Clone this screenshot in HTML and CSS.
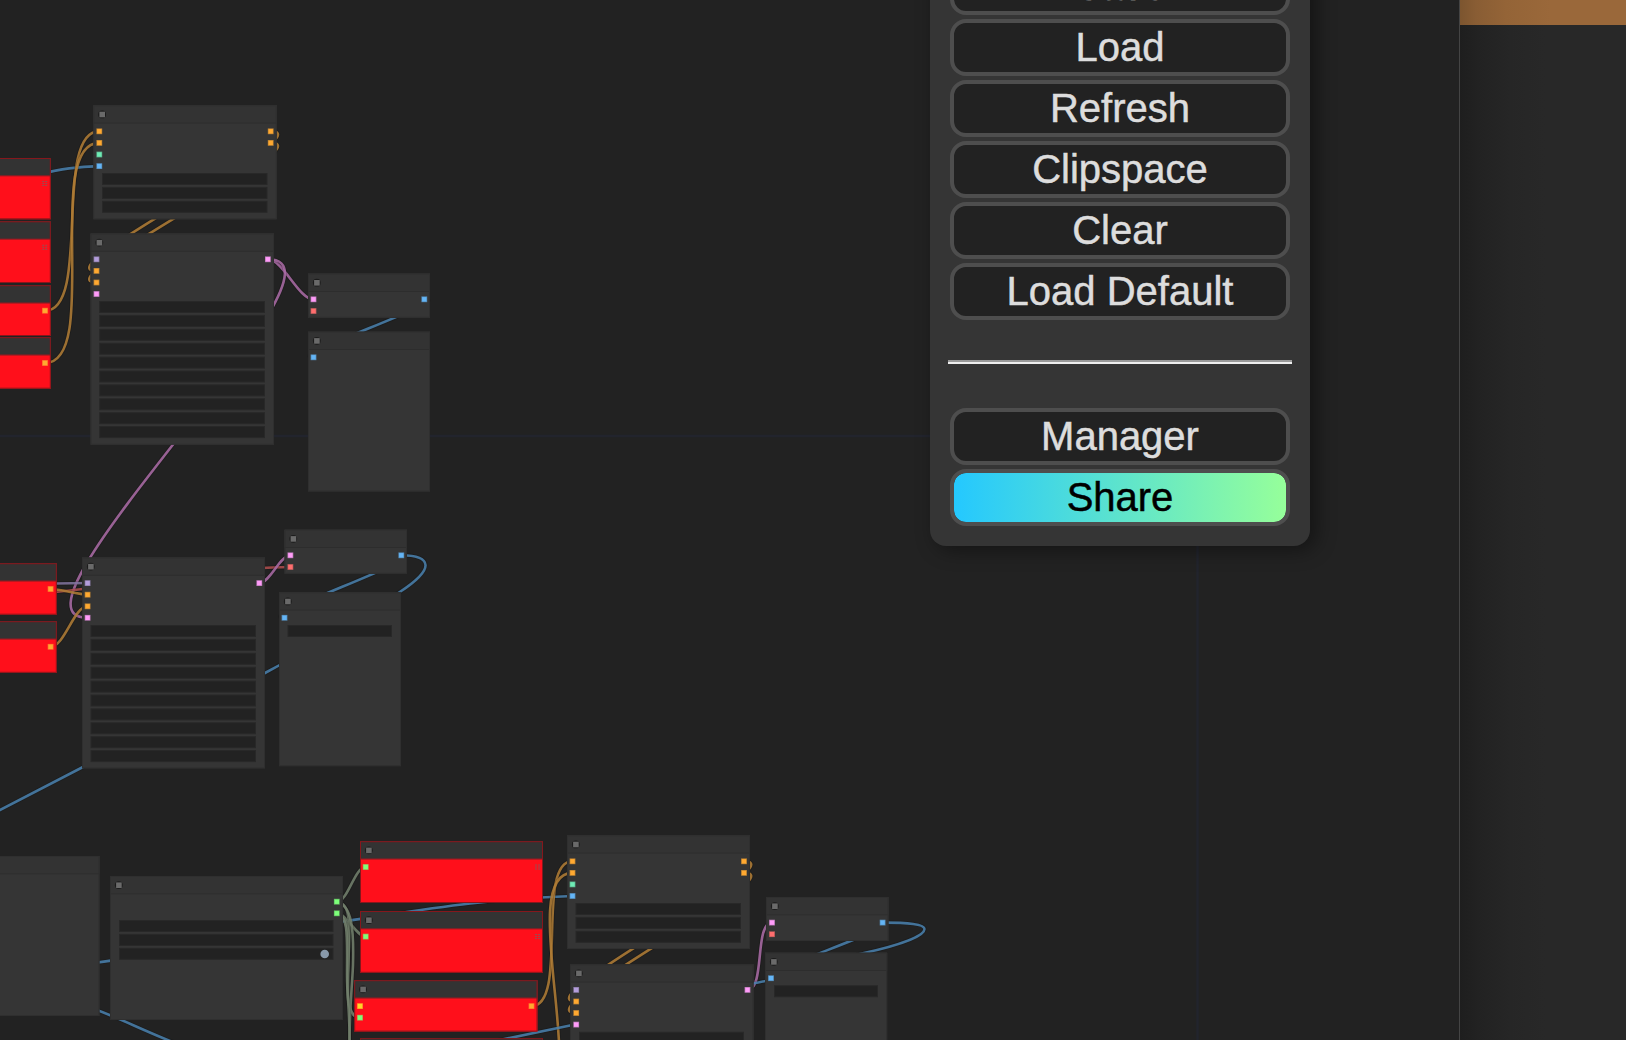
FILE: index.html
```html
<!DOCTYPE html>
<html lang="en">
<head>
<meta charset="utf-8">
<title>Node editor</title>
<link rel="stylesheet" href="styles.css">
</head>
<body>
<div class="desktop">
  <main class="editor">
    <svg class="graph" id="graph" width="1459" height="1040" viewBox="0 0 1459 1040" aria-hidden="true">
      <path class="axis" d="M0 436H1197.500V1040"/>
      <g id="links"></g>
      <g id="nodes"></g>
    </svg>
    <aside class="menu">
      <button class="btn">Save</button>
      <button class="btn">Load</button>
      <button class="btn">Refresh</button>
      <button class="btn">Clipspace</button>
      <button class="btn">Clear</button>
      <button class="btn">Load Default</button>
      <hr class="rule">
      <button class="btn">Manager</button>
      <button class="btn share">Share</button>
    </aside>
  </main>
  <section class="backdrop"><div class="band"></div></section>
</div>
<script src="graph.js"></script>
</body>
</html>
```

FILE: styles.css
```css
* { box-sizing: border-box; }
body { margin: 0; background: #222; overflow: hidden; }
.desktop { display: flex; width: 1626px; height: 1040px; overflow: hidden; }
.editor { position: relative; flex: 0 0 1460px; height: 1040px; background: #222; border-right: 1px solid #444; overflow: hidden; }
.graph { display: block; }
.axis { fill: none; stroke: #22242d; stroke-width: 2.5; }
.halo { fill: none; stroke: #000; stroke-opacity: .15; stroke-width: 4.5; }
.link { fill: none; stroke-width: 2.6; stroke-opacity: .85; }
.body { fill: #353535; }
.title { fill: #333; }
.seam { fill: #2d2d2d; }
.edge { fill: none; stroke: #2f2f2f; stroke-width: 1; }
.error .body { fill: #ff0f1b; }
.error .seam { fill: #7b2025; }
.error .edge { stroke: #86171c; }
.widget { fill: #222; stroke: #282828; stroke-width: 1; }
.dot-ring { fill: #1b1b1b; }
.dot { fill: #6a6a6a; }
.slot-edge { opacity: .65; }
.knob { fill: #8899aa; }
.ghost { fill: none; stroke: #9b4a50; stroke-width: 1; stroke-dasharray: 2 1; }

.menu {
  position: absolute; top: -62px; left: 930px; width: 380px; height: 608px;
  padding: 20px; background: #353535; border-radius: 16px;
  box-shadow: 6px 4px 20px rgba(0, 0, 0, .42);
  display: flex; flex-direction: column; gap: 4px;
}
.btn {
  flex: 0 0 57px; width: 340px; padding: 0 0 2px; border: 4px solid #4e4e4e; border-radius: 16px;
  background: #222; color: #ddd; font: 40px/46px "Liberation Sans", Arial, sans-serif; text-align: center;
  -webkit-text-stroke: .5px currentColor;
}
.rule {
  width: 344px; height: 4px; margin: 36px -2px 40px; flex: 0 0 4px;
  border: 0; border-top: 2px solid #9a9a9a; border-bottom: 2px solid #eee;
}
.share { background: linear-gradient(90deg, #24c8ff, #96ff9a) padding-box; color: #000; }

.backdrop { flex: 1; background: linear-gradient(90deg, #1e1e1e, #222 18px, #262626 50px, #282828 85px); }
.band { height: 25px; background: linear-gradient(90deg, #7c552f, #895d34 16px, #946437 46px, #9a683a 90px); }
```

FILE: graph.js
```js
const O = '#ffa931', B = '#64b5f6', P = '#ff9cf9', V = '#b39ddb', R = '#ff6e6e', T = '#6eecb5', G = '#7dff7a', Y = '#ffd42a';

// box: [left, top, right, bottom]; widgets: [left, right, top, count]
const nodes = [
  { box: [-60, 158, 50.8, 219.3], error: 1, ghost: [44.7, 183.5] },
  { box: [-60, 221.3, 50.8, 283], error: 1, ghost: [44.7, 247.3] },
  { box: [-60, 285.2, 50.8, 336], error: 1, slots: [[45, 310.7, O]] },
  { box: [-60, 337.2, 50.8, 388.7], error: 1, slots: [[45, 363, O]] },
  { box: [93.3, 105.3, 276.7, 219.3], slots: [[99.3, 131.3, O], [99.3, 142.9, O], [99.3, 154.5, T], [99.3, 166.1, B], [270.7, 131.3, O], [270.7, 142.9, O]], widgets: [102, 267.5, 173, 3] },
  { box: [90.5, 233.5, 274, 444.7], slots: [[96.5, 259.3, V], [96.5, 270.9, O], [96.5, 282.5, O], [96.5, 294, P], [267.9, 259.3, P]], widgets: [99.2, 265, 301, 10] },
  { box: [308, 273.6, 430, 317.9], slots: [[313.5, 299.3, P], [313.5, 311, R], [424.3, 299.3, B]] },
  { box: [308, 331.7, 430, 491.5], slots: [[313.5, 357.3, B]] },
  { box: [-60, 563.2, 56.8, 614.7], error: 1, slots: [[50.6, 589, O]] },
  { box: [-60, 621.2, 56.8, 672.8], error: 1, slots: [[50.6, 646.8, O]] },
  { box: [82, 557.5, 265, 768.4], slots: [[87.6, 583.1, V], [87.6, 594.7, O], [87.6, 606.3, O], [87.6, 617.8, P], [259.3, 583.1, P]], widgets: [90.5, 256, 625, 10] },
  { box: [284.5, 529.7, 407, 573.8], slots: [[290.4, 555.3, P], [290.4, 567, R], [401.3, 555.3, B]] },
  { box: [279, 592.3, 401, 766.2], slots: [[284.5, 617.8, B]], widgets: [287.5, 392, 625, 1] },
  { box: [-60, 856, 99.5, 1016] },
  { box: [110, 876, 343, 1020], slots: [[336.8, 901.7, G], [336.8, 913.3, G]], widgets: [119, 333.5, 920, 3], knob: [324.7, 954] },
  { box: [360, 841.2, 543, 903], error: 1, slots: [[365.7, 867, G]], ghost: [537.5, 867] },
  { box: [360, 911, 543, 972.8], error: 1, slots: [[365.7, 936.6, G]], ghost: [537.5, 936.5] },
  { box: [354.2, 980.2, 537.5, 1031.6], error: 1, slots: [[360, 1006.1, Y], [360, 1017.7, G], [531.5, 1006.1, O]] },
  { box: [360, 1038.2, 543, 1100], error: 1 },
  { box: [567, 835.3, 750, 949], slots: [[572.5, 861.3, O], [572.5, 872.9, O], [572.5, 884.4, T], [572.5, 896, B], [744, 861.3, O], [744, 872.9, O]], widgets: [575.5, 741, 903, 3] },
  { box: [570, 964.2, 753.6, 1180], slots: [[576.2, 989.9, V], [576.2, 1001.5, O], [576.2, 1013, O], [576.2, 1024.6, P], [747.5, 989.9, P]], widgets: [579, 744, 1031.7, 1] },
  { box: [766, 897, 888.5, 941], slots: [[772, 922.6, P], [772, 934.2, R], [882.6, 922.6, B]] },
  { box: [765, 952.7, 887.2, 1180], slots: [[771, 978.2, B]], widgets: [774, 878, 985.3, 1] },
];

// A link leaves its output and enters its input horizontally.
const wire = (x1, y1, x2, y2) => {
  const k = Math.hypot(x2 - x1, y2 - y1) * 0.25;
  return `M${x1} ${y1}C${x1 + k} ${y1} ${x2 - k} ${y2} ${x2} ${y2}`;
};
const o = '#b47f36', b = '#4a82b0', p = '#ae6da9', g = '#74826f';
const links = [
  [b, 'M35 175C62 169 78 166.300 99 166.100'],
  [o, wire(45, 310.7, 99.3, 131.3)], [o, wire(45, 363, 99.3, 142.9)],
  [o, wire(270.7, 131.3, 96.5, 270.9)], [o, wire(270.7, 142.9, 96.5, 282.5)],
  [p, wire(267.9, 259.3, 313.5, 299.3)], [p, wire(267.9, 259.3, 87.6, 617.8)],
  [b, wire(424.3, 299.3, 313.5, 357.3)],
  ['#8375a0', 'M40 583.700L88 583'],
  ['#b04f4f', 'M40 593.500C130 586 210 567.500 290 567'],
  [o, wire(50.6, 589, 87.6, 594.7)], [o, wire(50.6, 646.8, 87.6, 606.3)],
  [p, wire(259.3, 583.1, 290.4, 555.3)],
  [b, wire(401.3, 555.3, 284.5, 617.8)],
  [b, 'M401 555.300C417 555.300 425 558.500 425.500 565C426 573 412 584 399 592.500C360 618 310 649 265 673C200 707 140 739 82 767.500L-5 812.500'],
  [b, 'M90 963.500C180 952 270 932 343 921.500S480 899 572.500 896'],
  [b, 'M90 1007.500C115 1016 140 1029 175 1043'],
  [g, wire(336.8, 901.7, 365.7, 867)],
  [g, wire(336.8, 913.3, 365.7, 936.6)],
  [g, wire(336.8, 901.7, 360, 1017.7)],
  [g, wire(336.8, 913.3, 360, 1017.7)],
  [g, 'M336.800 901.700C352 905 354 930 353 965C352 990 349.500 1005 349.500 1045'],
  [g, 'M336.800 913.300C349 915 347 940 347 975C347 1000 350 1010 349.500 1045'],
  [o, wire(531.5, 1006.1, 572.5, 861.3)], [o, wire(537, 1110, 572.5, 872.9)],
  [o, wire(744, 861.3, 576.2, 1001.5)], [o, wire(744, 872.9, 576.2, 1013)],
  [p, wire(747.5, 989.9, 772, 922.6)],
  [b, wire(882.6, 922.6, 771, 978.2)],
  [b, 'M882.600 922.600C908 922.600 924.500 924 924.500 929C924.500 936 900 945 864 953C825 963 790 977 753 983.500C690 999 630 1013 570 1025.500L495 1041'],
];

document.getElementById('links').innerHTML = links.map(([c, d]) =>
  `<path class="halo" d="${d}"/><path class="link" stroke="${c}" d="${d}"/>`).join('');

const rect = (cls, x, y, w, h, extra = '') => `<rect class="${cls}" x="${x}" y="${y}" width="${w}" height="${h}" ${extra}/>`;

document.getElementById('nodes').innerHTML = nodes.map(n => {
  const [l, t, r, bt] = n.box, w = r - l;
  let s = rect('body', l, t, w, bt - t) + rect('title', l, t, w, 17.6) + rect('seam', l, t + 17.4, w, 0.9)
    + rect('edge', l + 0.5, t + 0.5, w - 1, bt - t - 1);
  if (l > 0) {
    s += `<circle class="dot-ring" cx="${l + 8.8}" cy="${t + 9.1}" r="3.9"/>` + rect('dot', l + 6.1, t + 6.4, 5.6, 5.6);
  }
  if (n.widgets) {
    const [a, z, y, count] = n.widgets;
    for (let i = 0; i < count; i++) s += rect('widget', a + 0.5, y + i * 13.9 + 0.5, z - a - 1, 11);
  }
  for (const [x, y, c] of n.slots || []) {
    s += rect('slot-edge', x - 2.9, y - 2.9, 5.8, 5.8, `fill="${c}"`) + rect('slot', x - 2.2, y - 2.2, 4.4, 4.4, `fill="${c}"`);
  }
  if (n.knob) s += `<circle class="knob" cx="${n.knob[0]}" cy="${n.knob[1]}" r="4.3"/>`;
  if (n.ghost) {
    const [x, y] = n.ghost;
    s += `<path class="ghost" d="M${x - 2.5} ${y - 2}h5M${x - 2.5} ${y}h5M${x - 2.5} ${y + 2}h5"/>`;
  }
  return `<g class="${n.error ? 'error' : 'plain'}">${s}</g>`;
}).join('');
```
